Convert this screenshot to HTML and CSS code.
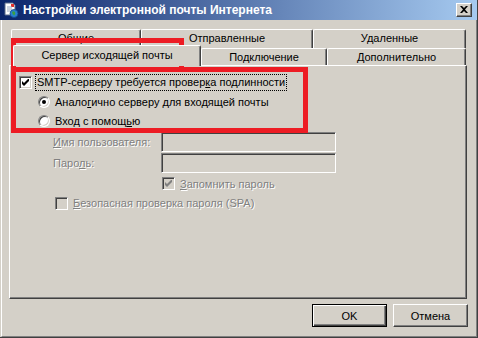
FILE: index.html
```html
<!DOCTYPE html>
<html lang="ru">
<head>
<meta charset="utf-8">
<title>Настройки электронной почты Интернета</title>
<link rel="stylesheet" href="styles.css">
</head>
<body>
<div class="window">
  <div class="titlebar">
    <svg class="app-icon" width="16" height="16" viewBox="0 0 16 16">
      <path d="M2 1 H10 L12 3 V13 H2 Z" fill="#fff" stroke="#5a6a8a" stroke-width="1"/>
      <rect x="8" y="2" width="3" height="3" fill="#e0302a"/>
      <path d="M4 5 H9 M4 7 H9 M4 9 H7" stroke="#9aa8c0" stroke-width="1"/>
      <circle cx="11" cy="11.5" r="4" fill="#2a7fd0" stroke="#104a8a" stroke-width="0.8"/>
      <path d="M9 10 Q10.5 8.5 12 10 Q13 12 11 13.5 Q9.5 13 9 10 Z" fill="#3aa040"/>
    </svg>
    <span class="title">Настройки электронной почты Интернета</span>
    <div class="close-btn">
      <svg width="8" height="7" viewBox="0 0 8 7">
        <path d="M0 0 H2 L4 2 L6 0 H8 L5 3.5 L8 7 H6 L4 5 L2 7 H0 L3 3.5 Z" fill="#000"/>
      </svg>
    </div>
  </div>
  <div class="body">
    <div class="tabs">
      <div class="tab-row row-back">
        <div class="tab tab-general">Общие</div>
        <div class="tab tab-sent">Отправленные</div>
        <div class="tab tab-deleted">Удаленные</div>
      </div>
      <div class="tab-row row-front">
        <div class="tab tab-smtp selected">Сервер исходящей почты</div>
        <div class="tab tab-conn">Подключение</div>
        <div class="tab tab-adv">Дополнительно</div>
      </div>
    </div>
    <div class="panel">
      <div class="row row-auth">
        <span class="check"><svg width="7" height="7" viewBox="0 0 7 7"><path d="M0 2 L2 4 L7 -1 V2 L2 7 L0 5 Z" fill="#000"/></svg></span>
        <span class="focus-label">SMTP-серверу требуется провер<u>к</u>а подлинности</span>
      </div>
      <div class="row row-radio">
        <span class="radio checked"><span class="dot"></span></span>
        <span class="label">Анало<u>г</u>ично серверу для входящей почты</span>
      </div>
      <div class="row row-radio">
        <span class="radio"></span>
        <span class="label">Вход с помощ<u>ь</u>ю</span>
      </div>
      <div class="row row-field">
        <span class="field-label disabled"><u>И</u>мя пользователя:</span>
        <span class="input"></span>
      </div>
      <div class="row row-field">
        <span class="field-label disabled">Паро<u>л</u>ь:</span>
        <span class="input"></span>
      </div>
      <div class="row row-remember">
        <span class="check disabled-box"><svg width="7" height="7" viewBox="0 0 7 7"><path d="M0 2 L2 4 L7 -1 V2 L2 7 L0 5 Z" fill="#808080"/></svg></span>
        <span class="label disabled"><u>З</u>апомнить пароль</span>
      </div>
      <div class="row row-spa">
        <span class="check disabled-box"></span>
        <span class="label disabled"><u>Б</u>езопасная проверка пароля (SPA)</span>
      </div>
    </div>
    <div class="buttons">
      <div class="btn default">OK</div>
      <div class="btn">Отмена</div>
    </div>
  </div>
  <div class="mark mark-tab"></div>
  <div class="mark mark-auth"></div>
</div>
</body>
</html>
```

FILE: styles.css
```css
* { box-sizing: border-box; }
html, body { margin: 0; padding: 0; }
body {
  width: 478px;
  height: 338px;
  overflow: hidden;
  background: #d4d0c8;
  font-family: "Liberation Sans", Arial, sans-serif;
  font-size: 11px;
  color: #000;
}
.window {
  position: relative;
  width: 478px;
  height: 338px;
  background: #d4d0c8;
  border-right: 1px solid #404040;
  border-bottom: 1px solid #404040;
}
.titlebar {
  height: 20px;
  display: flex;
  align-items: center;
  background: linear-gradient(to right, #0a246a, #a6caf0);
  padding-left: 3px;
}
.app-icon { flex: none; }
.title {
  margin-left: 4px;
  color: #fff;
  font-weight: bold;
  font-size: 12px;
  flex: 1;
  white-space: nowrap;
}
.close-btn {
  width: 16px;
  height: 14px;
  margin-right: 5px;
  background: #d4d0c8;
  border-top: 1px solid #fff;
  border-left: 1px solid #fff;
  border-right: 1px solid #404040;
  border-bottom: 1px solid #404040;
  box-shadow: inset -1px -1px #808080;
  display: flex;
  align-items: center;
  justify-content: center;
  padding-bottom: 1px;
}
.body {
  height: 317px;
  margin-left: 1px;
  border-left: 1px solid #fff;
  border-right: 1px solid #808080;
  border-bottom: 1px solid #808080;
  padding-top: 9px;
}
.tabs { display: flex; flex-direction: column; }
.tab-row { display: flex; align-items: flex-end; }
.row-back { height: 19px; margin-left: 9px; }
.row-front { height: 20px; margin-left: 11px; margin-top: -3px; }
.tab {
  background: #d4d0c8;
  border-top: 1px solid #fff;
  border-left: 1px solid #fff;
  border-right: 1px solid #404040;
  box-shadow: inset -1px 0 #808080;
  border-radius: 2px 2px 0 0;
  text-align: center;
  white-space: nowrap;
}
.row-back .tab { height: 19px; line-height: 17px; }
.row-front .tab { height: 17px; line-height: 16px; }
.tab-general { width: 130px; }
.tab-sent { width: 172px; }
.tab-deleted { width: 153px; }
.tab-smtp { width: 188px; }
.tab-conn { width: 126px; }
.tab-adv { width: 139px; }
.row-front .tab.selected {
  position: relative;
  z-index: 1;
  height: 21px;
  margin-bottom: -1px;
  line-height: 18px;
}
.panel {
  margin-left: 7px;
  width: 458px;
  height: 234px;
  border-top: 1px solid #fff;
  border-left: 1px solid #fff;
  border-right: 1px solid #404040;
  border-bottom: 1px solid #404040;
  box-shadow: inset -1px -1px #808080;
  padding-top: 7px;
}
.row { display: flex; align-items: center; }
.row-auth { height: 19px; padding-left: 9px; }
.row-radio { height: 19px; padding-left: 28px; }
.row-field { height: 21px; padding-left: 43px; }
.row-field:first-of-type { margin-top: 0; }
.row-auth + .row-radio + .row-radio { margin-bottom: 1px; }
.row-remember { height: 21px; padding-left: 152px; }
.row-spa { height: 18px; padding-left: 45px; }
.check {
  flex: none;
  width: 13px;
  height: 13px;
  background: #fff;
  border-top: 1px solid #808080;
  border-left: 1px solid #808080;
  border-right: 1px solid #fff;
  border-bottom: 1px solid #fff;
  box-shadow: inset 1px 1px #404040, inset -1px -1px #d4d0c8;
  display: flex;
  align-items: center;
  justify-content: center;
}
.check.disabled-box { background: #d4d0c8; }
.focus-label {
  margin-left: 3px;
  padding: 1px 1px 1px 1px;
  border: 1px dotted #000;
  line-height: 13px;
  white-space: nowrap;
}
.radio {
  flex: none;
  position: relative;
  width: 12px;
  height: 12px;
  border-radius: 50%;
  background: #fff;
  border: 1px solid;
  border-color: #808080 #fff #fff #808080;
  box-shadow: inset 1px 1px #404040, inset -1px -1px #d4d0c8;
  display: flex;
  align-items: center;
  justify-content: center;
}
.dot {
  width: 4px;
  height: 4px;
  border-radius: 50%;
  background: #000;
}
.label { margin-left: 5px; white-space: nowrap; }
.field-label { width: 108px; white-space: nowrap; }
.disabled { color: #808080; text-shadow: 1px 1px 0 #fff; }
.input {
  width: 175px;
  height: 20px;
  background: #d4d0c8;
  border-top: 1px solid #808080;
  border-left: 1px solid #808080;
  border-right: 1px solid #fff;
  border-bottom: 1px solid #fff;
  box-shadow: inset 1px 1px #404040, inset -1px -1px #d4d0c8;
}
.buttons {
  display: flex;
  justify-content: flex-end;
  gap: 6px;
  margin-top: 5px;
  padding-right: 8px;
}
.btn {
  width: 75px;
  height: 23px;
  display: flex;
  align-items: center;
  justify-content: center;
  background: #d4d0c8;
  border-top: 1px solid #fff;
  border-left: 1px solid #fff;
  border-right: 1px solid #404040;
  border-bottom: 1px solid #404040;
  box-shadow: inset -1px -1px #808080;
}
.btn.default {
  border: 1px solid #000;
  box-shadow: inset 1px 1px #fff, inset -1px -1px #404040, inset -2px -2px #808080;
}
.mark {
  position: absolute;
  border: 5px solid #ed1c24;
  pointer-events: none;
}
.mark-tab { left: 11px; top: 38px; width: 173px; height: 34px; }
.mark-auth { left: 11px; top: 67px; width: 297px; height: 66px; }
```
